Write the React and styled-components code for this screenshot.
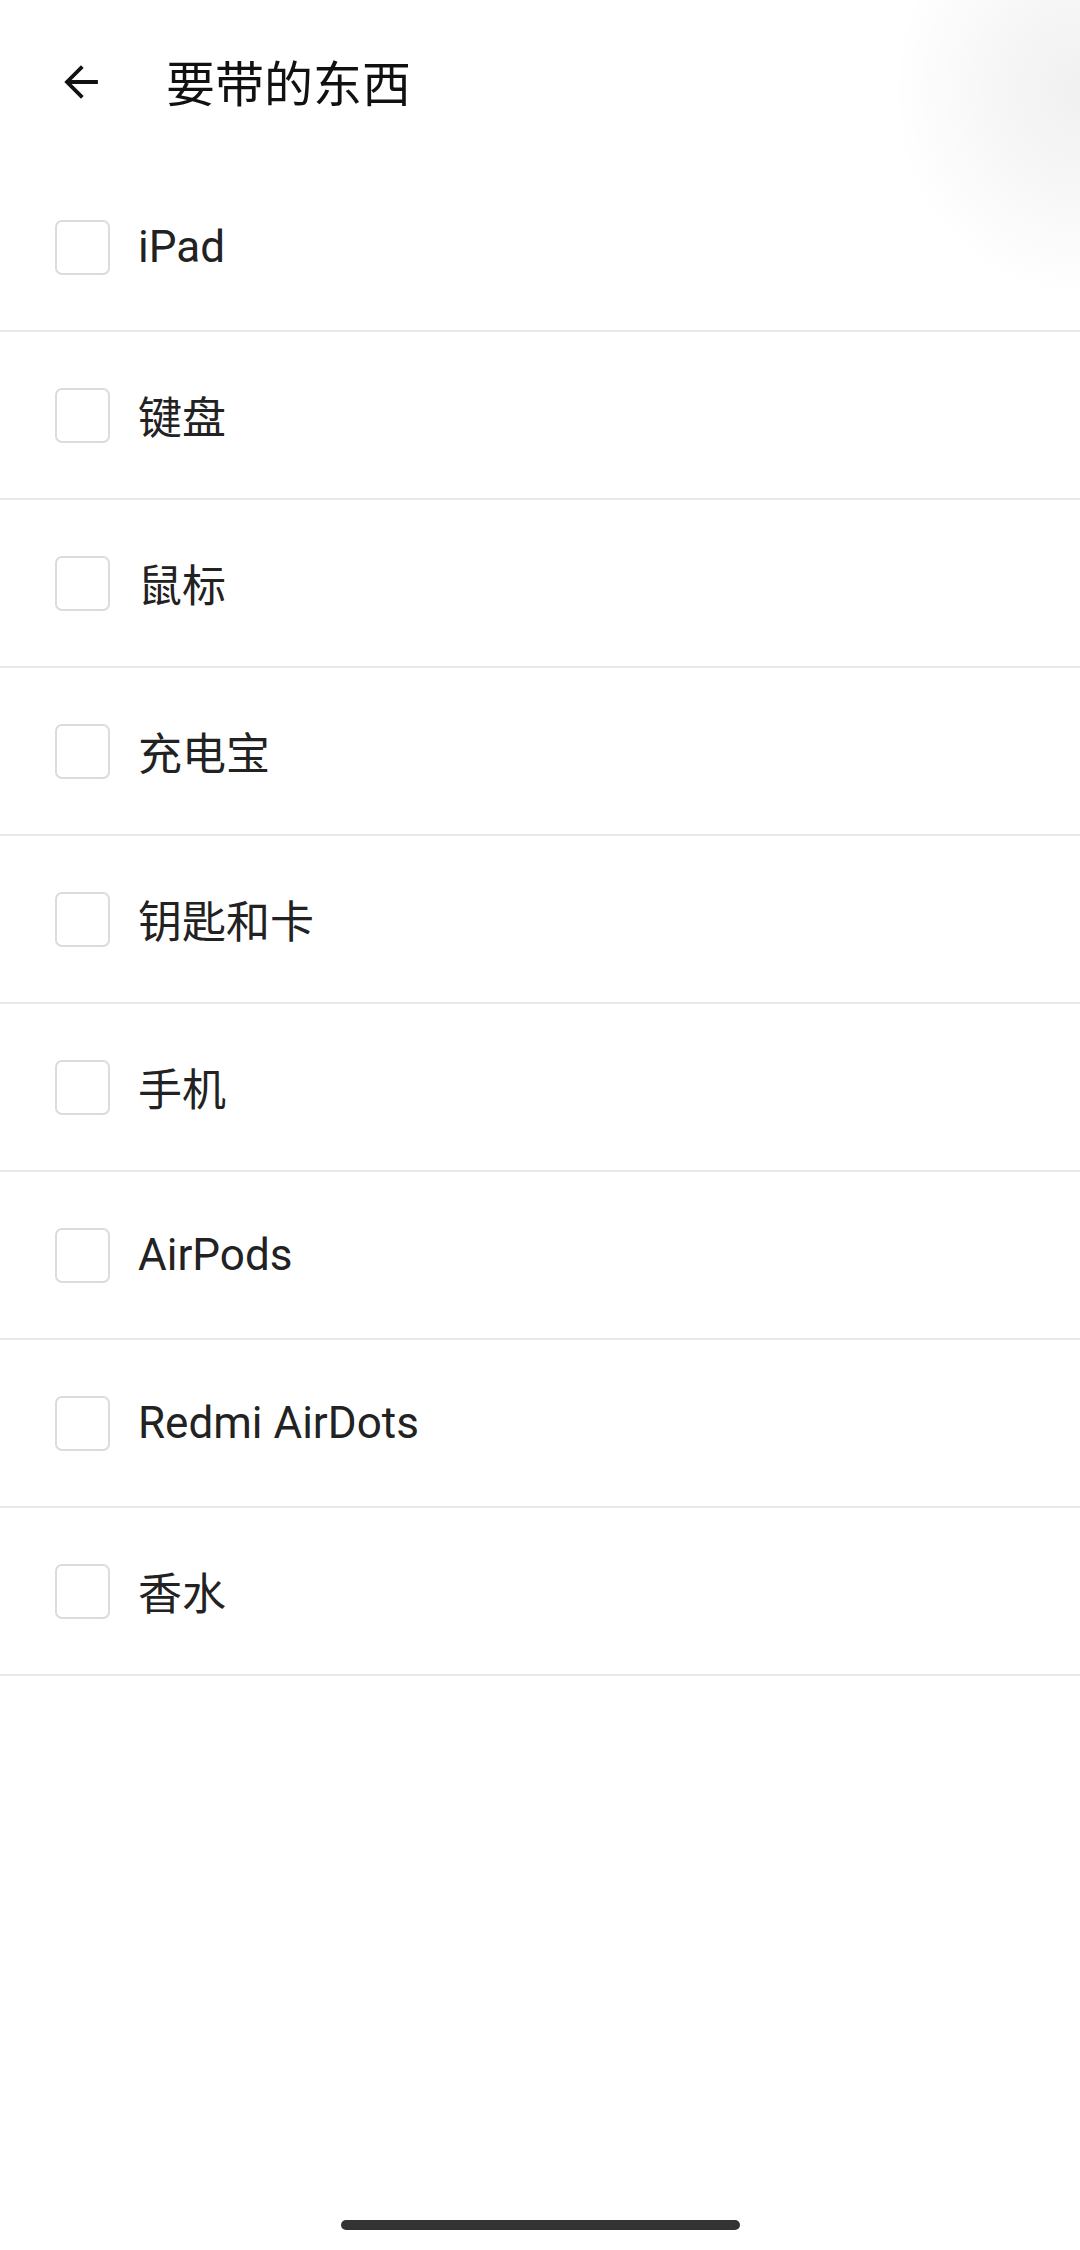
import React from "react";
import styled, { createGlobalStyle } from "styled-components";

const GlobalStyle = createGlobalStyle`
  html, body {
    margin: 0;
    padding: 0;
    background: #ffffff;
  }
  body {
    font-family: Roboto, "Noto Sans CJK SC", sans-serif;
  }
`;

const items = [
  "iPad",
  "键盘",
  "鼠标",
  "充电宝",
  "钥匙和卡",
  "手机",
  "AirPods",
  "Redmi AirDots",
  "香水"
];

const Page = styled.div`
  position: relative;
  min-height: 2250px;
  display: flex;
  flex-direction: column;
  background: #ffffff;
  overflow: hidden;
`;

// touch ripple left over in the top-right corner
const Ripple = styled.div`
  position: absolute;
  top: -120px;
  right: -190px;
  width: 380px;
  height: 420px;
  border-radius: 50%;
  pointer-events: none;
  background: radial-gradient(
    ellipse at 50% 50%,
    rgba(0, 0, 0, 0.06) 0,
    rgba(0, 0, 0, 0.03) 35%,
    rgba(0, 0, 0, 0) 70%
  );
`;

const Header = styled.header`
  height: 164px;
  display: flex;
  align-items: center;
  padding-left: 64px;
  box-sizing: border-box;
`;

const BackButton = styled.button`
  width: 34px;
  height: 34px;
  padding: 0;
  border: none;
  background: none;
  display: flex;
  align-items: center;
  justify-content: center;
  cursor: pointer;
`;

const Title = styled.h1`
  margin: -4px 0 0 68px;
  font-family: "Noto Sans CJK SC", sans-serif;
  font-weight: 400;
  font-size: 49px;
  line-height: 1;
  color: #111111;
`;

const List = styled.ul`
  list-style: none;
  margin: 0;
  padding: 0;
`;

const Row = styled.li`
  height: 168px;
  box-sizing: border-box;
  border-bottom: 2px solid #e9e9e9;
  display: flex;
  align-items: center;
  padding-left: 55px;
`;

const Box = styled.span`
  width: 55px;
  height: 55px;
  box-sizing: border-box;
  border: 2px solid #dcdcdc;
  border-radius: 7px;
  background: #fff;
  flex-shrink: 0;
`;

const Label = styled.span`
  margin-left: 28px;
  font-family: Roboto, "Noto Sans CJK SC", sans-serif;
  font-size: 44px;
  color: #222222;
`;

const HomeBar = styled.div`
  margin: auto auto 20px;
  width: 399px;
  height: 10px;
  border-radius: 5px;
  background: #333333;
`;

const BackArrow = () => (
  <svg width="34" height="34" viewBox="0 0 34 34" fill="none">
    <path
      d="M32 17H4M17 3L3 17l14 14"
      stroke="#111"
      strokeWidth="3.8"
      strokeLinecap="square"
    />
  </svg>
);

export default function App() {
  return (
    <Page>
      <GlobalStyle />
      <Header>
        <BackButton aria-label="back">
          <BackArrow />
        </BackButton>
        <Title>要带的东西</Title>
      </Header>
      <List>
        {items.map(item => (
          <Row key={item}>
            <Box />
            <Label>{item}</Label>
          </Row>
        ))}
      </List>
      <HomeBar />
      <Ripple />
    </Page>
  );
}
